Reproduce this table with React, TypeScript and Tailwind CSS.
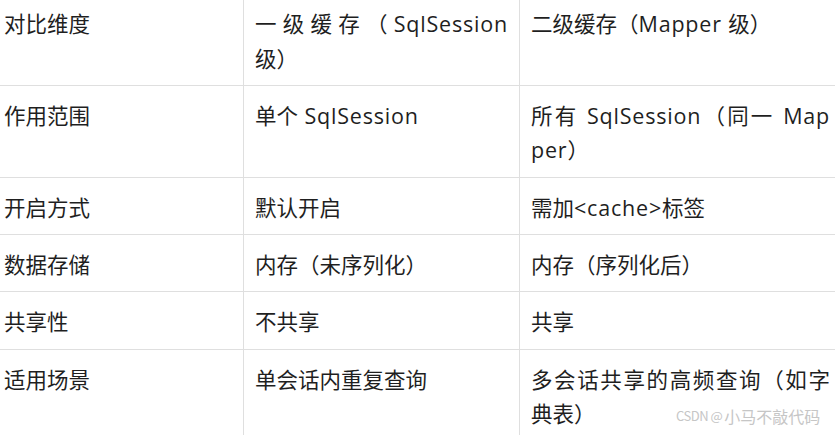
const rows: string[][][] = [
  [['对比维度'], ['一级缓存（SqlSession', '级）'], ['二级缓存（Mapper 级）']],
  [['作用范围'], ['单个 SqlSession'], ['所有 SqlSession（同一 Map', 'per）']],
  [['开启方式'], ['默认开启'], ['需加<cache>标签']],
  [['数据存储'], ['内存（未序列化）'], ['内存（序列化后）']],
  [['共享性'], ['不共享'], ['共享']],
  [['适用场景'], ['单会话内重复查询'], ['多会话共享的高频查询（如字', '典表）']],
]

// latin runs get a little extra spacing, the source font sets them wider
function Runs({ text }: { text: string }) {
  const parts = text.match(/[\x20-\x7e]+|[^\x20-\x7e]+/g) ?? []
  return (
    <>
      {parts.map((p, i) =>
        /^[\x20-\x7e]+$/.test(p) ? (
          <span key={i} className="tracking-[0.8px]">
            {p}
          </span>
        ) : (
          <span key={i}>{p}</span>
        ),
      )}
    </>
  )
}

function Cell({ lines, last }: { lines: string[]; last: boolean }) {
  return (
    <div
      className={
        'border-b border-[#dfdfdf] px-[11px] pt-[13px] pb-[9px] ' + (last ? '' : 'border-r')
      }
    >
      {lines.map((line, i) => (
        <span
          key={i}
          className={
            'block whitespace-nowrap ' +
            (i < lines.length - 1 ? 'text-justify [text-align-last:justify]' : '')
          }
        >
          <Runs text={line} />
        </span>
      ))}
    </div>
  )
}

export default function App() {
  return (
    <div className="relative w-[835px] h-[435px] overflow-hidden bg-white">
      <div
        className="grid grid-cols-[251px_276px_321px] ml-[-7px] mt-[-5.67px] text-[21.5px] leading-[34.33px] text-[#1f1f1f]"
        style={{ fontFamily: '"Open Sans", "Noto Sans CJK SC", sans-serif' }}
      >
        {rows.map((row, r) =>
          row.map((lines, c) => <Cell key={r + '-' + c} lines={lines} last={c === 2} />),
        )}
      </div>
      <div
        className="absolute left-[676px] top-[405px] flex items-center gap-[2px] leading-[22px] text-[#c6c6c6] whitespace-nowrap"
        style={{ fontFamily: '"Noto Sans CJK SC", sans-serif' }}
      >
        <span className="text-[13px] tracking-[-0.5px]">CSDN @</span>
        <span className="text-[16px]">小马不敲代码</span>
      </div>
    </div>
  )
}
